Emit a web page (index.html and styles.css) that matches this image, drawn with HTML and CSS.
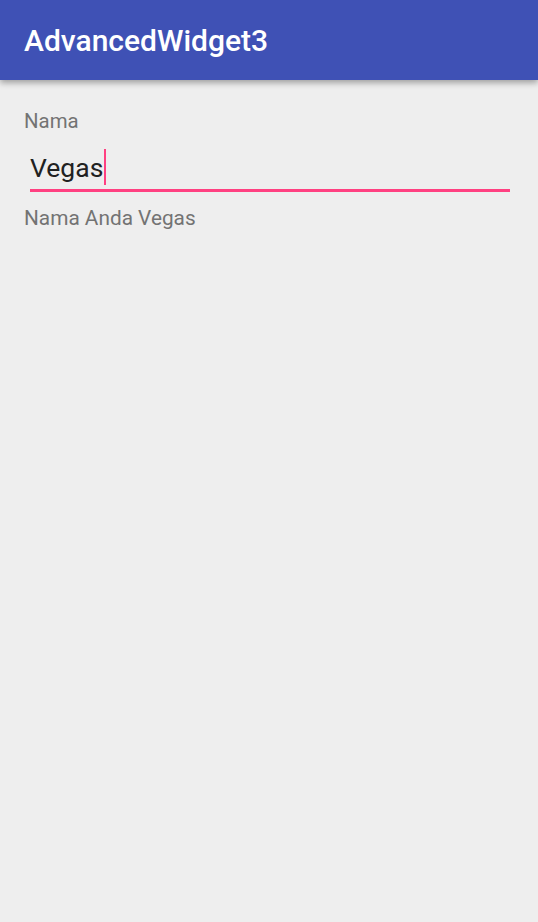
FILE: index.html
```html
<!DOCTYPE html>
<html>
<head>
<meta charset="utf-8">
<link rel="stylesheet" href="styles.css">
</head>
<body>
<header class="appbar"><h1 class="title">AdvancedWidget3</h1></header>
<main class="content">
  <label class="label">Nama</label>
  <div class="field"><span class="value">Vegas</span><span class="cursor"></span></div>
  <p class="result">Nama Anda Vegas</p>
</main>
</body>
</html>
```
FILE: styles.css
```css
html, body { margin: 0; padding: 0; }
body {
  width: 538px;
  height: 922px;
  background: #eeeeee;
  font-family: Roboto, "Noto Sans", sans-serif;
  overflow: hidden;
}
.appbar {
  height: 80px;
  background: #3f51b5;
  display: flex;
  align-items: center;
  padding: 0 24px;
  box-shadow: 0 3px 6px rgba(0,0,0,0.32);
  position: relative;
}
.title {
  margin: 0;
  color: #ffffff;
  font-size: 30px;
  font-weight: 500;
}
.content {
  padding: 29px 28px 0 24px;
  display: flex;
  flex-direction: column;
}
.label {
  font-size: 20.4px;
  color: #737373;
  line-height: 24px;
}
.field {
  margin: 10px 0 0 6px;
  height: 42px;
  border-bottom: 3px solid #ff4081;
  display: flex;
  align-items: flex-end;
  padding-bottom: 4px;
}
.value {
  font-size: 26.5px;
  color: #212121;
  line-height: 30px;
  margin-bottom: 2px;
}
.cursor {
  width: 2px;
  height: 36px;
  background: #ff4081;
  margin-left: 1px;
}
.result {
  margin: 14px 0 0;
  font-size: 20.8px;
  color: #737373;
  line-height: 24px;
}
```
